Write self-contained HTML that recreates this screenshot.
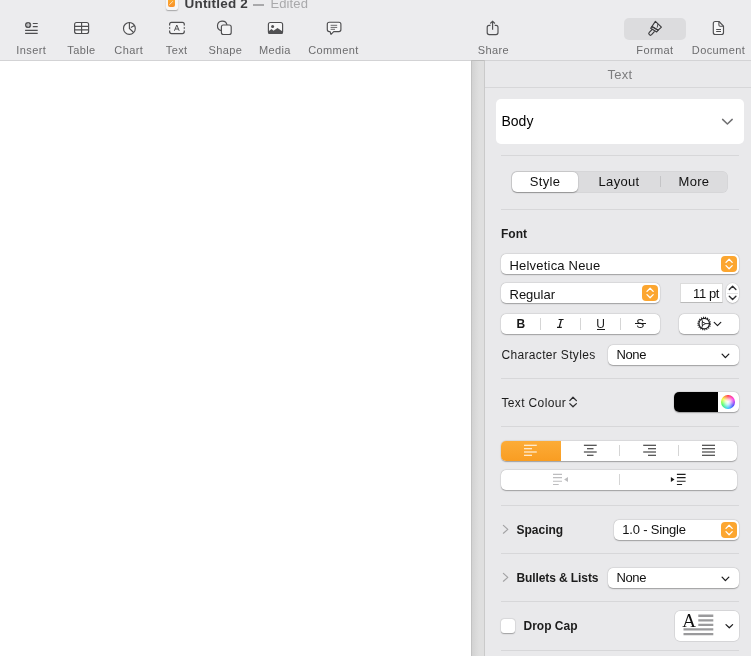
<!DOCTYPE html>
<html><head><meta charset="utf-8">
<style>
*{margin:0;padding:0;box-sizing:border-box}
html,body{width:751px;height:656px;overflow:hidden;background:#fff;font-family:"Liberation Sans",sans-serif}
.a{position:absolute}
.t{position:absolute;line-height:1;white-space:nowrap}
svg{position:absolute;overflow:visible}
#tb{left:0;top:0;width:751px;height:61px;background:#ececee;border-bottom:1px solid #d3d3d5}
.ti{position:absolute;width:80px;text-align:center;font-size:11px;letter-spacing:0.4px;color:#6c6c6e;top:44.7px;line-height:1}
#canvas{left:0;top:61px;width:471px;height:595px;background:#fff}
#gut{left:471px;top:60px;width:14px;height:596px;background:linear-gradient(90deg,#d2d2d2,#dadada 35%,#dfdfdf 60%,#dfdfdf);border-left:1px solid #c2c2c2;border-right:1px solid #cacaca;border-top:1px solid #bdbdbd}
#side{left:485px;top:61px;width:266px;height:595px;background:#e9e9eb}
.sep{position:absolute;left:501px;width:238px;height:1px;background:#d7d7d9}
.box{position:absolute;background:#fff;border-radius:5px;box-shadow:0 0.5px 1.2px rgba(0,0,0,0.30),0 0 0 0.5px rgba(0,0,0,0.05)}
.lbl{font-size:12px;color:#1c1c1c}
.v13{font-size:13px;color:#111}
.bold{font-weight:bold}
.orng{position:absolute;background:#fca630;border-radius:4px}
</style></head><body><div id="root" style="position:absolute;left:0;top:0;width:751px;height:656px;background:#fff;will-change:transform">
<div id="tb" class="a">
  <!-- title -->
  <div class="a" style="left:166px;top:-3px;width:12.2px;height:13px;background:#f6f6f6;border-radius:2px;box-shadow:0 0.5px 1.2px rgba(0,0,0,.3)"></div>
  <div class="a" style="left:167.5px;top:-2px;width:7.8px;height:8.8px;background:linear-gradient(#fcb030,#f8902a);border-radius:1px 1px 2px 2px"></div><svg width="751" height="20" style="left:0;top:0"><path d="M169.3 4.8L172.9 1.3" stroke="#fde0c0" stroke-width="1"/></svg>
  <div class="t bold" style="left:184.5px;top:-2.9px;font-size:13.5px;letter-spacing:0.2px;color:#3e3e40">Untitled 2</div>
  <div class="a" style="left:252.5px;top:4.3px;width:11px;height:1.3px;background:#a9a9ab"></div>
  <div class="t" style="left:270.5px;top:-2.6px;font-size:13px;letter-spacing:0.1px;color:#a9a9ab">Edited</div>

  <!-- icons -->
  <svg width="751" height="61" style="left:0;top:0" fill="none" stroke="#4e4e50" stroke-width="1.15">
    <!-- Insert -->
    <circle cx="28.1" cy="25" r="3.1" fill="#505052" stroke="none"/>
    <path d="M26 25h4.2M28.1 22.9v4.2" stroke="#ececee" stroke-width="0.9"/>
    <path d="M32.8 23.5h4.9M32.8 26.6h4.9M25.1 30.3h12.6M25.1 33.4h12.6"/>
    <!-- Table -->
    <rect x="74.6" y="22.5" width="14" height="11" rx="2" fill="#f6f6f7"/>
    <path d="M74.6 26.4h14M74.6 29.9h14M81.6 22.5v11"/>
    <!-- Chart -->
    <circle cx="129.4" cy="28.4" r="5.9" fill="#f4f4f5"/>
    <path d="M129.4 22.5v5.9l4.2 4.1M130.8 27.6l3.8-2"/>
    <!-- Text -->
    <path d="M169.6 25.4v-1a2 2 0 0 1 2-2h10.7a2 2 0 0 1 2 2v1M169.6 30.4v1.2a2 2 0 0 0 2 2h10.7a2 2 0 0 0 2-2v-1.2M169.6 27.3v1.4M184.3 27.3v1.4"/>
    <rect x="171" y="23.5" width="12" height="9" fill="#f4f4f5" stroke="none"/>
    <path d="M174.4 30.8l2.4-5.8 2.4 5.8M175.3 29h3" stroke-width="1"/>
    <!-- Shape -->
    <path d="M221.4 30.6a4.8 4.8 0 1 1 5.6-5.6"/>
    <rect x="221.4" y="25" width="9.8" height="9.5" rx="2" fill="#f4f4f5"/>
    <!-- Media -->
    <rect x="268.4" y="22.5" width="14.2" height="11" rx="2" fill="#f6f6f7"/>
    <circle cx="272.6" cy="26.5" r="1.5" fill="#505052" stroke="none"/>
    <path d="M268.4 31.5l3.1-2.4 2 1.6 4-2.8 5.1 3.6v2.3h-14.2z" fill="#505052" stroke="none"/>
    <!-- Comment -->
    <path d="M329.3 22.2h9.6a2 2 0 0 1 2 2v5.4a2 2 0 0 1-2 2h-5.2l-2.7 2.8-.9-2.8h-.8a2 2 0 0 1-2-2v-5.4a2 2 0 0 1 2-2z" fill="#f6f6f7" stroke-linejoin="round"/>
    <path d="M330.6 25.3h6.6M330.6 27.4h6.6M330.6 29.3h4.4" stroke-width="1" stroke="#6a6a6c"/>
    <!-- Share -->
    <path d="M490.5 25.4h-1.3a2 2 0 0 0-2 2v5.2a2 2 0 0 0 2 2h6.8a2 2 0 0 0 2-2v-5.2a2 2 0 0 0-2-2h-1.3"/>
    <path d="M492.6 29.8v-8.4M490.3 23.5l2.3-2.3 2.3 2.3"/>
    <!-- Format highlight drawn separately -->
    <!-- Document -->
    <path d="M715.3 21.5h3.7l4.5 4.6v6.4a2 2 0 0 1-2 2h-6.2a2 2 0 0 1-2-2v-9a2 2 0 0 1 2-2z" fill="#f6f6f7" stroke-linejoin="round"/>
    <path d="M718.9 21.6v3.4a1.2 1.2 0 0 0 1.2 1.2h3.3M716.2 29.5h4.8M716.2 31.5h4.8" stroke-width="1.1"/>
  </svg>

  <div class="ti" style="left:-8.7px">Insert</div>
  <div class="ti" style="left:41.5px">Table</div>
  <div class="ti" style="left:88.8px">Chart</div>
  <div class="ti" style="left:136.7px">Text</div>
  <div class="ti" style="left:185.4px">Shape</div>
  <div class="ti" style="left:234.9px">Media</div>
  <div class="ti" style="left:293.4px">Comment</div>
  <div class="ti" style="left:453.4px">Share</div>
  <div class="a" style="left:624px;top:18px;width:62px;height:22px;background:#dcdcde;border-radius:5px"></div>
  <svg width="751" height="61" style="left:0;top:0" fill="none" stroke="#3a3a3c" stroke-width="1.15" stroke-linejoin="round">
    <g>
      <path d="M655.4 21.4 L661.4 27.2 L658.2 30.2 L651.9 26.5 Z" fill="#e2e2e4"/>
      <path d="M651.9 26.5 L658.2 30.2 L656.7 32 L650.7 28.3 Z"/>
      <path d="M652.4 29.2 L649.3 32.4 a1.6 1.6 0 0 0 2.3 2.3 L654.6 31.4"/>
      <path d="M657.9 24 L657.2 27.6" stroke-width="0.9"/>
    </g>
  </svg>
  <div class="ti" style="left:614.9px">Format</div>
  <div class="ti" style="left:678.5px">Document</div>
</div>
<div id="canvas" class="a"></div>
<div id="gut" class="a"></div>
<div id="side" class="a"></div>
<div class="a" style="left:485px;top:87px;width:266px;height:1px;background:#d7d7d9"></div>
<div class="t" style="left:487px;width:266px;text-align:center;top:68px;font-size:13px;letter-spacing:0.3px;color:#7c7c7e">Text</div>

<!-- Body style box -->
<div class="a" style="left:496px;top:99px;width:248px;height:45px;background:#fff;border-radius:5px"></div>
<div class="t" style="left:501.5px;top:114.1px;font-size:14px;color:#000">Body</div>
<svg width="20" height="20" style="left:715px;top:112px" fill="none" stroke="#707072" stroke-width="1.5" stroke-linecap="round" stroke-linejoin="round"><path d="M7.6 7.4l4.8 4.6 4.8-4.6"/></svg>
<div class="sep" style="top:155px"></div>

<!-- segmented -->
<div class="a" style="left:511px;top:171px;width:217px;height:22px;background:#dcdcde;border-radius:6px;box-shadow:inset 0 0 0 0.5px rgba(0,0,0,.05)"></div>
<div class="box" style="left:512px;top:172px;width:66px;height:20px;border-radius:5px"></div>
<div class="t v13" style="left:512px;width:66px;text-align:center;top:175px;letter-spacing:0.3px;color:#111">Style</div>
<div class="t v13" style="left:579px;width:80px;text-align:center;top:175px;letter-spacing:0.3px;color:#111">Layout</div>
<div class="a" style="left:660px;top:176px;width:1px;height:11px;background:#c4c4c6"></div>
<div class="t v13" style="left:661px;width:66px;text-align:center;top:175px;letter-spacing:0.3px;color:#111">More</div>
<div class="sep" style="top:209px"></div>

<!-- Font -->
<div class="t lbl bold" style="left:501px;top:227.8px">Font</div>
<div class="box" style="left:501px;top:254px;width:238px;height:20px"></div>
<div class="t v13" style="left:509.5px;top:259px;letter-spacing:0.2px">Helvetica Neue</div>
<div class="orng" style="left:721px;top:256px;width:16px;height:16px"></div>
<svg width="16" height="16" style="left:721px;top:256px" fill="none" stroke="#fff" stroke-width="1.3" stroke-linecap="round" stroke-linejoin="round"><path d="M5 6.4l3.1-3.1 3.1 3.1M5 9.6l3.1 3.1 3.1-3.1"/></svg>

<div class="box" style="left:501px;top:283px;width:159px;height:20px"></div>
<div class="t v13" style="left:509.5px;top:288px">Regular</div>
<div class="orng" style="left:642px;top:285px;width:16px;height:16px"></div>
<svg width="16" height="16" style="left:642px;top:285px" fill="none" stroke="#fff" stroke-width="1.3" stroke-linecap="round" stroke-linejoin="round"><path d="M5 6.4l3.1-3.1 3.1 3.1M5 9.6l3.1 3.1 3.1-3.1"/></svg>

<div class="a" style="left:680px;top:283px;width:43px;height:20px;background:#fff;border:1px solid #dcdcdc;border-bottom-color:#bababa"></div>
<div class="t v13" style="left:680px;width:39px;text-align:right;top:287px;letter-spacing:-0.4px">11 pt</div>
<div class="box" style="left:726px;top:283px;width:13px;height:20px;border-radius:6.5px"></div>
<div class="a" style="left:727px;top:293px;width:11px;height:1px;background:#e2e2e2"></div>
<svg width="16" height="22" style="left:724px;top:282px" fill="none" stroke="#2e2e30" stroke-width="1.4" stroke-linecap="round" stroke-linejoin="round"><path d="M5.3 7.4l3.3-3.2 3.3 3.2M5.3 14.3l3.3 3.2 3.3-3.2"/></svg>

<!-- BIUS -->
<div class="box" style="left:501px;top:314px;width:159px;height:20px"></div>
<div class="t bold" style="left:516.6px;top:318.4px;font-size:12px;color:#1a1a1a">B</div>
<div class="a" style="left:540px;top:318px;width:1px;height:11.5px;background:#d5d5d5"></div>
<svg width="751" height="656" style="left:0;top:0" fill="none" stroke="#1a1a1a"><path d="M558.6 319.5h5M557 327.3h4.8" stroke-width="1.15"/><path d="M561.3 319.6 L559.3 327.2" stroke-width="1.3"/></svg>
<div class="a" style="left:580px;top:318px;width:1px;height:11.5px;background:#d5d5d5"></div>
<div class="t" style="left:596.2px;top:318.2px;font-size:12px;color:#1a1a1a">U</div>
<div class="a" style="left:596.5px;top:329.2px;width:8.5px;height:1px;background:#1a1a1a"></div>
<div class="a" style="left:620px;top:318px;width:1px;height:11.5px;background:#d5d5d5"></div>
<div class="t" style="left:636.3px;top:318.2px;font-size:12px;color:#1a1a1a">S</div>
<div class="a" style="left:635px;top:322.7px;width:10.6px;height:1px;background:#1a1a1a"></div>

<div class="box" style="left:679px;top:314px;width:60px;height:20px"></div>
<svg width="30" height="20" style="left:694px;top:314px" fill="none" stroke="#1c1c1e" stroke-linecap="round" stroke-linejoin="round">
  <circle cx="10.2" cy="9.6" r="6.2" stroke-width="1.3" stroke-dasharray="1 1.1" stroke-linecap="butt" stroke-width="2"/>
  <circle cx="10.2" cy="9.6" r="5.3" stroke-width="1.2"/>
  <path d="M8.6 8 L11.6 9.6 L8.6 11.2 Z M11.6 9.6 h4 M8.6 8 l-1 -3.2 M8.6 11.2 l-1 3.2" stroke-width="0.9"/>
  <path d="M20.2 8.4l3.3 3.2 3.3-3.2" stroke-width="1.2"/>
</svg>

<div class="t lbl" style="left:501.5px;top:349px;letter-spacing:0.33px">Character Styles</div>
<div class="box" style="left:607.5px;top:344.8px;width:131.2px;height:20.5px"></div>
<div class="t v13" style="left:616.5px;top:348px;letter-spacing:-0.4px">None</div>
<svg width="16" height="16" style="left:717px;top:348px" fill="none" stroke="#1c1c1e" stroke-width="1.3" stroke-linecap="round" stroke-linejoin="round"><path d="M5.1 6.1l3.3 3.5 3.4-3.5"/></svg>
<div class="sep" style="top:378px"></div>

<div class="t lbl" style="left:501.5px;top:396.5px;letter-spacing:0.35px">Text Colour</div>
<svg width="16" height="16" style="left:565px;top:394px" fill="none" stroke="#2c2c2e" stroke-width="1.3" stroke-linecap="round" stroke-linejoin="round"><path d="M4.8 6.6l3.2-3.4 3.4 3.4M4.8 9.6l3.2 3.2 3.4-3.2"/></svg>
<div class="box" style="left:674px;top:391.5px;width:64.5px;height:20.6px;overflow:hidden"><div class="a" style="left:0;top:0;width:44px;height:21px;background:#000"></div></div>
<div class="a" style="left:721px;top:395px;width:14px;height:14px;border-radius:50%;background:conic-gradient(from 0deg,#ff3040,#ff30e0 60deg,#4a40ff 125deg,#30c8ff 180deg,#40ff60 245deg,#f0ff30 300deg,#ff9030 330deg,#ff3040)"></div>
<div class="a" style="left:721px;top:395px;width:14px;height:14px;border-radius:50%;background:radial-gradient(circle,#fff 0%,rgba(255,255,255,.75) 25%,rgba(255,255,255,0) 68%)"></div>
<div class="sep" style="top:426px"></div>

<!-- alignment -->
<div class="box" style="left:501px;top:441px;width:236px;height:20px;overflow:hidden"><div class="a" style="left:0;top:0;width:59.5px;height:20px;background:linear-gradient(#fcac38,#f99d22)"></div></div>
<div class="a" style="left:619px;top:445px;width:1px;height:11px;background:#d5d5d5"></div>
<div class="a" style="left:678px;top:445px;width:1px;height:11px;background:#d5d5d5"></div>
<svg width="236" height="20" style="left:501px;top:441px" stroke-width="1.1">
  <path d="M23 4.3h12.8M23 7.7h8M23 11h12.8M23 14.3h8" stroke="#fff"/>
  <path d="M82.9 4.3h12.8M86 7.7h6.5M82.9 11h12.8M86 14.3h6.5" stroke="#222"/>
  <path d="M142.2 4.3h12.8M147 7.7h8M142.2 11h12.8M147 14.3h8" stroke="#222"/>
  <path d="M201 4.3h13M201 7.7h13M201 11h13M201 14.3h13" stroke="#222"/>
</svg>
<div class="box" style="left:501px;top:470px;width:236px;height:20px"></div>
<div class="a" style="left:619px;top:474px;width:1px;height:11px;background:#d5d5d5"></div>
<svg width="236" height="20" style="left:501px;top:470px" stroke-width="1.1">
  <path d="M52 4.4h9M52 7.6h9M52 11.3h9M52 14.5h5.7" stroke="#bdbdbf" stroke-width="1.1"/>
  <path d="M67 7.1v4.8l-3.9-2.4z" fill="#bdbdbf"/>
  <path d="M175.9 4.4h8.7M175.9 7.6h8.7M175.9 11.3h8.7M175.9 14.5h5.2" stroke="#1e1e1e" stroke-width="1.1"/>
  <path d="M169.9 6.9v5.1l3.6-2.55z" fill="#1e1e1e"/>
</svg>
<div class="sep" style="top:505px"></div>

<svg width="16" height="16" style="left:498px;top:521px" fill="none" stroke="#a2a2a4" stroke-width="1.2" stroke-linecap="round" stroke-linejoin="round"><path d="M5.4 4.4l4.4 4-4.4 3.8"/></svg>
<div class="t lbl bold" style="left:516.5px;top:524.2px">Spacing</div>
<div class="box" style="left:613.5px;top:519.8px;width:125.4px;height:20.4px"></div>
<div class="t v13" style="left:622.3px;top:523.4px;letter-spacing:-0.2px">1.0 - Single</div>
<div class="orng" style="left:721px;top:522px;width:15.8px;height:16px"></div>
<svg width="16" height="16" style="left:721px;top:522px" fill="none" stroke="#fff" stroke-width="1.3" stroke-linecap="round" stroke-linejoin="round"><path d="M5 6.4l3.1-3.1 3.1 3.1M5 9.6l3.1 3.1 3.1-3.1"/></svg>
<div class="sep" style="top:553px"></div>

<svg width="16" height="16" style="left:498px;top:569px" fill="none" stroke="#a2a2a4" stroke-width="1.2" stroke-linecap="round" stroke-linejoin="round"><path d="M5.4 4.4l4.4 4-4.4 3.8"/></svg>
<div class="t lbl bold" style="left:516.5px;top:571.5px;letter-spacing:-0.1px">Bullets &amp; Lists</div>
<div class="box" style="left:607.5px;top:567.5px;width:131.2px;height:20px"></div>
<div class="t v13" style="left:616.5px;top:570.5px;letter-spacing:-0.4px">None</div>
<svg width="16" height="16" style="left:717px;top:570.5px" fill="none" stroke="#1c1c1e" stroke-width="1.3" stroke-linecap="round" stroke-linejoin="round"><path d="M5.1 6.1l3.3 3.5 3.4-3.5"/></svg>
<div class="sep" style="top:601px"></div>

<div class="box" style="left:501px;top:619px;width:13.5px;height:13.5px;border-radius:3px"></div>
<div class="t lbl bold" style="left:523.5px;top:619.8px">Drop Cap</div>
<div class="a" style="left:674.5px;top:610.5px;width:64px;height:30px;background:#fff;border-radius:5px;box-shadow:0 0 0 0.7px rgba(0,0,0,.11)"></div>
<div class="t" style="left:682.2px;top:611.4px;font-size:19px;font-family:'Liberation Serif',serif;color:#111">A</div>
<svg width="64" height="30" style="left:674.5px;top:610.5px" stroke="#9a9a9c" stroke-width="2.4">
  <path d="M23.3 4.7h15M23.3 9.4h15M23.3 13.9h15M8.5 18.4h29.8M8.5 23.1h29.8"/>
  <path d="M51 13.6l3.3 3.2 3.3-3.2" fill="none" stroke="#1c1c1e" stroke-width="1.25" stroke-linecap="round" stroke-linejoin="round"/>
</svg>
<div class="sep" style="top:650px"></div>
</div></body></html>
